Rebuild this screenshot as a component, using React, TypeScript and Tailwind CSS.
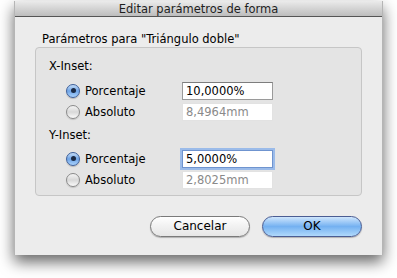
import React from "react";

const font = { fontFamily: '"DejaVu Sans", "Liberation Sans", sans-serif' };

function Radio({ checked }: { checked: boolean }) {
  return checked ? (
    <div className="w-[14px] h-[14px] rounded-full border border-[#3d5f9a] bg-gradient-to-b from-[#c4dcf6] via-[#6fa4e6] to-[#a9d1fb] flex items-center justify-center shrink-0 shadow-[0_1px_1px_rgba(0,0,0,0.2)]">
      <div className="w-[5px] h-[5px] rounded-full bg-[#1b2a44]" />
    </div>
  ) : (
    <div className="w-[14px] h-[14px] rounded-full border border-[#8a8a8a] bg-gradient-to-b from-[#f4f4f4] via-[#d8d8d8] to-[#fafafa] shrink-0 shadow-[0_1px_1px_rgba(0,0,0,0.15)]" />
  );
}

function Row({
  label,
  checked,
  value,
  disabled,
  focused,
}: {
  label: string;
  checked: boolean;
  value: string;
  disabled?: boolean;
  focused?: boolean;
}) {
  const field = disabled
    ? "border-[#e2e2e2] text-[#8a8a8a] bg-white"
    : focused
    ? "border-[#6f94cf] text-black bg-white shadow-[0_0_0_2px_#9bbbe9]"
    : "border-[#9a9a9a] border-t-[#7d7d7d] text-black bg-white";
  return (
    <div className="h-[21px] flex items-center pl-[17px]">
      <Radio checked={checked} />
      <span className="ml-[5px] w-[97px] text-[11.5px] leading-[14px] text-black">{label}</span>
      <div className={`w-[91px] h-[18px] border px-[3px] text-[11.5px] leading-[16px] ${field}`}>{value}</div>
    </div>
  );
}

export default function App() {
  return (
    <div className="w-[397px] h-[278px] bg-white pl-[14px] pt-[1px]" style={font}>
      <div className="w-[369px] h-[254px] bg-[#ececec] flex flex-col shadow-[0_7px_14px_rgba(0,0,0,0.6)] border-x border-[#b5b5b5]">
        <div className="h-[16px] bg-gradient-to-b from-[#ebebeb] to-[#bdbdbd] border-b border-[#555] text-center text-[11.5px] leading-[16px] text-[#1e1e1e]">
          Editar parámetros de forma
        </div>
        <div className="px-[20px]">
          <div className="pt-[15px] pl-[7px] text-[11.5px] leading-[14px] text-black">
            Parámetros para "Triángulo doble"
          </div>
          <div className="mt-[1px] h-[149px] rounded-[4px] border border-[#c6c6c6] bg-[#e4e4e4] pl-[13px] pt-[11px]">
            <div className="text-[11.5px] leading-[14px] text-black">X-Inset:</div>
            <div className="mt-[7px]">
              <Row label="Porcentaje" checked value="10,0000%" />
              <Row label="Absoluto" checked={false} value="8,4964mm" disabled />
            </div>
            <div className="mt-[6px] text-[11.5px] leading-[14px] text-black">Y-Inset:</div>
            <div className="mt-[6px]">
              <Row label="Porcentaje" checked value="5,0000%" focused />
              <Row label="Absoluto" checked={false} value="2,8025mm" disabled />
            </div>
          </div>
          <div className="mt-[20px] flex justify-end gap-[12px]">
            <button className="w-[100px] h-[21px] rounded-full border border-[#7a7a7a] bg-gradient-to-b from-white via-[#f1f1f1] to-[#e6e6e6] text-[12px] leading-[19px] text-black shadow-[0_1px_1px_rgba(0,0,0,0.25)]">
              Cancelar
            </button>
            <button className="w-[100px] h-[21px] rounded-full border border-[#4b5d93] bg-gradient-to-b from-[#cfe6fc] via-[#74b1f1] to-[#b0d9fb] text-[12px] leading-[19px] text-black shadow-[0_1px_1px_rgba(0,0,0,0.25)]">
              OK
            </button>
          </div>
        </div>
      </div>
    </div>
  );
}
